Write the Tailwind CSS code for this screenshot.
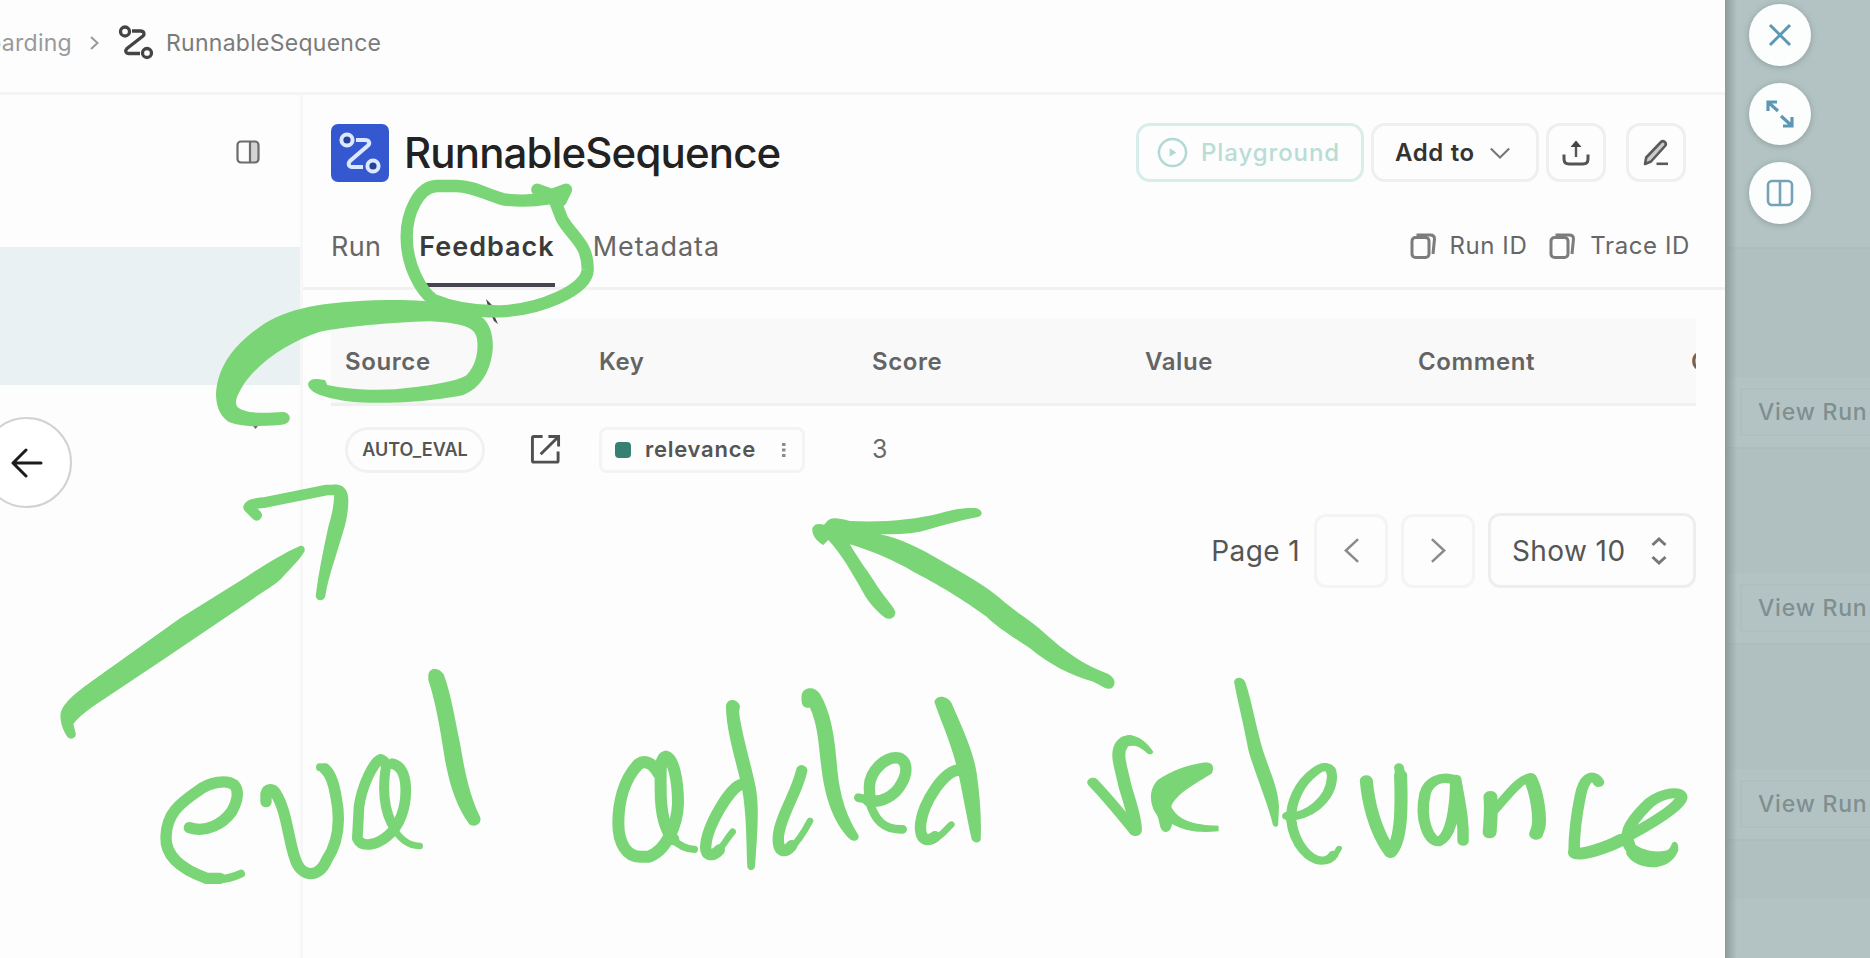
<!DOCTYPE html>
<html lang="en">
<head>
<meta charset="utf-8">
<title>RunnableSequence</title>
<script src="https://cdn.jsdelivr.net/npm/@tailwindcss/browser@4"></script>
</head>
<body class="relative flex h-[958px] w-[1870px] overflow-hidden bg-[#fdfdfd] font-['Inter',sans-serif] text-[#555]">

<!-- run drawer -->
<div class="flex w-[1725px] shrink-0 flex-col bg-[#fdfdfd]">
  <header class="flex h-[95px] shrink-0 items-center border-b-[3px] border-[#f4f4f4] pb-[6px] text-[23px] tracking-[0.27px] text-[#7b7b7b]">
    <div class="flex w-[72px] justify-end overflow-hidden whitespace-nowrap text-[#999]"><span>onboarding</span></div>
    <svg class="ml-[17px] h-4 w-3" viewBox="0 0 12 16" fill="none" stroke="#999" stroke-width="2"><path d="M2 2l6.500 6L2 14"/></svg>
    <svg class="ml-[17px] h-[36px] w-[36px]" viewBox="0 0 36 36" fill="none" stroke="#444" stroke-width="3.300"><circle cx="7" cy="6.500" r="4.500"/><circle cx="29" cy="28" r="4.500"/><path d="M14 6h8.500c3.500 0 4.500 3 2.500 5L9 23.500c-2.500 2.500-1 5 1.500 5H22"/></svg>
    <span class="ml-[12px]">RunnableSequence</span>
  </header>

  <div class="flex grow">
    <aside class="flex w-[303px] shrink-0 flex-col border-r-[3px] border-[#f7f7f7]">
      <div class="flex h-[152px] justify-end pr-[40px] pt-[45px]">
        <svg class="h-6 w-6" viewBox="0 0 24 24" fill="none" stroke="#6c6c6c" stroke-width="2.200"><path d="M14.500 2h5a2.500 2.500 0 0 1 2.500 2.500v15a2.500 2.500 0 0 1-2.500 2.500h-5z" fill="#d4d4d4" stroke="none"/><rect x="1.500" y="1.500" width="21" height="21" rx="3.500"/><path d="M14 2v20"/></svg>
      </div>
      <div class="h-[138px] bg-[#e9f1f2]"></div>
      <svg class="ml-[247px] mt-[36px] h-[10px] w-[17px]" viewBox="0 0 17 10"><path d="M3 1h11L8.500 8z" fill="#666"/></svg>
    </aside>

    <main class="flex grow flex-col pt-[28px]">
      <div class="flex h-[59px] items-center pl-[28px] pr-[39px]">
        <div class="flex h-[58px] w-[58px] items-center justify-center rounded-[7px] bg-[#3558d0]">
          <svg class="h-[42px] w-[42px]" viewBox="0 0 42 42" fill="none" stroke="#dbe8ff" stroke-width="4"><circle cx="8" cy="8" r="5.600" fill="#274099"/><circle cx="34" cy="34" r="5.600" fill="#274099"/><path d="M17 8h9c4 0 5.500 3 3 5.500L11 29c-2.500 3-1 6 2 6h11"/></svg>
        </div>
        <h1 class="ml-[15px] text-[42px] font-medium tracking-[-0.85px] text-[#222]">RunnableSequence</h1>
        <div class="ml-auto flex">
          <button class="flex h-[59px] w-[228px] items-center rounded-[14px] border-[3px] border-[#d8eeeb] pl-[18px] text-[24px] font-medium tracking-[0.9px] text-[#b9dcd6]">
            <svg class="mr-[13px] h-[31px] w-[31px]" viewBox="0 0 32 32" fill="none" stroke="#b2d9d3" stroke-width="2.600"><circle cx="16" cy="16" r="14"/><path d="M13 11.500v9l7-4.500z" fill="#b2d9d3" stroke="none"/></svg><span>Playground</span>
          </button>
          <button class="ml-[7px] flex h-[59px] w-[168px] items-center rounded-[14px] border-[3px] border-[#efefef] pl-[21px] text-[24px] font-semibold tracking-[0.65px] text-[#333]"><span>Add to</span>
            <svg class="ml-[14px] h-4 w-[22px]" viewBox="0 0 24 16" fill="none" stroke="#777" stroke-width="2.200"><path d="M2 3l10 10L22 3"/></svg>
          </button>
          <button class="ml-[7px] flex h-[59px] w-[60px] items-center justify-center rounded-[14px] border-[3px] border-[#efefef]">
            <svg class="h-[28px] w-[28px]" viewBox="0 0 28 28" fill="none" stroke="#555" stroke-width="3"><path d="M2 15.500V20c0 3.500 2 5 5 5h14c3 0 5-1.500 5-5v-4.500"/><path d="M14 18V5" stroke-width="2.400"/><path d="M8.500 8L14 1.500 19.500 8z" fill="#444" stroke="none"/></svg>
          </button>
          <button class="ml-[20px] flex h-[59px] w-[60px] items-center justify-center rounded-[14px] border-[3px] border-[#efefef]">
            <svg class="h-[28px] w-[28px]" viewBox="0 0 28 28" fill="none" stroke="#5a5a5a" stroke-width="2.600" stroke-linejoin="round"><path d="M3 25l1.200-6.500L19 3c2.200-2.200 6.500 1 4 4L9 22.500z" fill="#ccc"/><path d="M14.500 24.800H26"/></svg>
          </button>
        </div>
      </div>

      <nav class="flex h-[108px] border-b-[3px] border-[#f1f1f1] pl-[28px] pr-[35px] text-[27px]">
        <div class="flex h-[105px] items-center pt-[25px] tracking-[0.3px] text-[#666]">Run</div>
        <div class="ml-[38px] flex h-[105px] items-center border-b-4 border-[#484450] pt-[29px] font-semibold tracking-[1px] text-[#3a3a3a]">Feedback</div>
        <div class="ml-[38px] flex h-[105px] items-center pt-[25px] tracking-[0.9px] text-[#666]">Metadata</div>
        <div class="ml-auto flex h-[105px] items-center pt-[22px] text-[24px] tracking-[0.6px] text-[#666]">
          <svg class="mr-[11px] h-[28px] w-[28px]" viewBox="0 0 28 28" fill="none" stroke="#7c7c7c" stroke-width="3"><rect x="2" y="5.500" width="17" height="20" rx="3.500"/><path d="M6.500 3h14c2.500 0 4 1.500 4 4l-1.500 15"/></svg><span>Run ID</span>
          <svg class="ml-[22px] mr-[13px] h-[28px] w-[28px]" viewBox="0 0 28 28" fill="none" stroke="#7c7c7c" stroke-width="3"><rect x="2" y="5.500" width="17" height="20" rx="3.500"/><path d="M6.500 3h14c2.500 0 4 1.500 4 4l-1.500 15"/></svg><span>Trace ID</span>
        </div>
      </nav>

      <div class="ml-[28px] mt-[28px] w-[1365px] overflow-hidden">
        <div class="grid h-[88px] w-[1638px] grid-cols-[268px_273px_273px_273px_273px_273px] items-center border-b-[3px] border-[#f0f0f0] bg-[#f9f9f9] pt-[2px] text-[24px] font-semibold tracking-[0.6px] text-[#646464]">
          <div class="pl-[14px]">Source</div><div>Key</div><div>Score</div><div>Value</div><div>Comment</div><div>Created At</div>
        </div>
        <div class="grid h-[87px] w-[1638px] grid-cols-[268px_273px_273px_273px_273px_273px] items-center text-[22px]">
          <div class="flex items-center pl-[14px]">
            <div class="flex h-[46px] w-[140px] items-center justify-center rounded-full border-[3px] border-[#f1f1f1] text-[18px] font-semibold text-[#555]">AUTO_EVAL</div>
            <svg class="ml-[45px] h-[31px] w-[31px]" viewBox="0 0 32 32" fill="none" stroke="#505050" stroke-width="3"><path d="M13 2.500H4A1.500 1.500 0 0 0 2.500 4v23.500A1.500 1.500 0 0 0 4 29h23.500a1.500 1.500 0 0 0 1.500-1.500V18"/><path d="M19 2.500h10.500V13M29 3L11 21"/></svg>
          </div>
          <div class="flex h-[46px] w-[206px] items-center rounded-[8px] border-[3px] border-[#f3f4f6] pl-[13px] font-semibold tracking-[0.75px]">
            <div class="mr-[14px] h-[16px] w-[16px] rounded-[4px] bg-[#358073]"></div><span>relevance</span>
            <svg class="ml-[25px] h-[16px] w-[5px]" viewBox="0 0 5 16" fill="#8c8c8c"><rect x="1" y="1" width="3.500" height="3"/><rect x="1" y="6.500" width="3.500" height="3"/><rect x="1" y="12" width="3.500" height="3"/></svg>
          </div>
          <div class="text-[25px] text-[#6a6a6a]">3</div>
        </div>
      </div>

      <div class="mt-[20px] flex items-center justify-end pr-[29px] text-[28px] tracking-[0.4px]">
        <span>Page 1</span>
        <button class="ml-[14px] flex h-[74px] w-[74px] items-center justify-center rounded-[12px] border-[3px] border-[#f4f4f4]"><svg class="h-[27px] w-[17px]" viewBox="0 0 18 28" fill="none" stroke="#8a8a8a" stroke-width="2.600"><path d="M16 2L3 14l13 12"/></svg></button>
        <button class="ml-[13px] flex h-[74px] w-[74px] items-center justify-center rounded-[12px] border-[3px] border-[#f4f4f4]"><svg class="h-[27px] w-[17px]" viewBox="0 0 18 28" fill="none" stroke="#8a8a8a" stroke-width="2.600"><path d="M2 2l13 12L2 26"/></svg></button>
        <button class="ml-[13px] flex h-[75px] w-[208px] items-center rounded-[12px] border-[3px] border-[#eee] pl-[21px]"><span>Show 10</span>
          <svg class="ml-[26px] h-[30px] w-[16px]" viewBox="0 0 16 30" fill="none" stroke="#777" stroke-width="3"><path d="M1.500 9L8 3l6.500 6M1.500 21L8 27l6.500-6"/></svg>
        </button>
      </div>
    </main>
  </div>
</div>

<!-- dimmed page behind the drawer -->
<div class="flex grow flex-col bg-[#b3c3c4]">
  <div class="flex h-[249px] flex-col items-center gap-[17px] border-b-2 border-[#adbcbd] pr-[35px] pt-[4px]">
    <div class="flex h-[62px] w-[62px] shrink-0 items-center justify-center rounded-full bg-[#fcfefe] shadow-[0_1px_6px_#8b9b9b]"><svg class="h-6 w-6" viewBox="0 0 24 24" fill="none" stroke="#5d97b3" stroke-width="3"><path d="M2 2l20 20M22 2L2 22"/></svg></div>
    <div class="flex h-[62px] w-[62px] shrink-0 items-center justify-center rounded-full bg-[#fcfefe] shadow-[0_1px_6px_#8b9b9b]"><svg class="h-[28px] w-[28px]" viewBox="0 0 28 28" fill="none" stroke="#5d97b3" stroke-width="3.200"><path d="M2 11V2h9M2.500 2.500L12 11M17 26h9v-9M25.500 25.500L15 16"/></svg></div>
    <div class="flex h-[62px] w-[62px] shrink-0 items-center justify-center rounded-full bg-[#fcfefe] shadow-[0_1px_6px_#8b9b9b]"><svg class="h-[28px] w-[28px]" viewBox="0 0 28 28" fill="none" stroke="#76a2b8" stroke-width="2.600"><rect x="2" y="2" width="24" height="24" rx="4"/><path d="M14 2v24"/></svg></div>
  </div>
  <div class="flex h-[200px] flex-col justify-end bg-[#b0bfc0]"><div class="flex h-[72px] items-center border-b-2 border-[#adbcbd] bg-[#b3c3c4] pl-[15px]"><div class="flex h-[48px] w-[130px] shrink-0 items-center whitespace-nowrap border-y-2 border-l-2 border-[#afbebf] pl-[16px] text-[23px] font-medium tracking-[0.8px] text-[#7f8f90]">View Run</div></div></div>
  <div class="flex h-[196px] flex-col justify-end bg-[#b0bfc0]"><div class="flex h-[72px] items-center border-b-2 border-[#adbcbd] bg-[#b3c3c4] pl-[15px]"><div class="flex h-[48px] w-[130px] shrink-0 items-center whitespace-nowrap border-y-2 border-l-2 border-[#afbebf] pl-[16px] text-[23px] font-medium tracking-[0.8px] text-[#7f8f90]">View Run</div></div></div>
  <div class="flex h-[196px] flex-col justify-end bg-[#b0bfc0]"><div class="flex h-[72px] items-center border-b-2 border-[#adbcbd] bg-[#b3c3c4] pl-[15px]"><div class="flex h-[48px] w-[130px] shrink-0 items-center whitespace-nowrap border-y-2 border-l-2 border-[#afbebf] pl-[16px] text-[23px] font-medium tracking-[0.8px] text-[#7f8f90]">View Run</div></div></div>
  <div class="h-[58px] bg-[#b0bfc0]"></div>
</div>

<!-- drawer edge shadow -->
<div class="absolute left-[1725px] top-0 h-[958px] w-[12px] bg-linear-to-r from-[#8c9a9a] to-[#8c9a9a]/0"></div>

<!-- back button -->
<div class="absolute left-[-19px] top-[417px] flex h-[91px] w-[91px] items-center justify-center rounded-full border-2 border-[#d2d2d2] bg-white">
  <svg class="h-[30px] w-[32px]" viewBox="0 0 32 30" fill="none" stroke="#1c1c1c" stroke-width="3" stroke-linecap="round" stroke-linejoin="round"><path d="M30 15H2M15 2L2 15l13 13"/></svg>
</div>

<!-- pointer and freehand pen marks -->
<svg class="pointer-events-none absolute left-0 top-0 h-[958px] w-[1870px]" viewBox="0 0 1870 958" fill="none" stroke-linecap="round" stroke-linejoin="round">
  <path d="M486 299l9 9-2 5 5 11-4-3-5-11z" fill="#4a4550"/>
  <g stroke="#79d575" stroke-width="37" transform="translate(300 90) scale(.33333)">
    <path d="M745 325C700 333 650 333 610 328C560 315 520 288 470 288H410C355 290 320 370 320 440C320 530 365 605 400 630C460 655 520 665 600 664C720 660 860 600 863 540C865 460 815 440 785 385L762 325"/>
    <path d="M712 299L755 315L798 299L782 332" />
  </g>
  <g fill="#79d575" transform="translate(200 280) scale(.33333)">
    <path d="M255 432C230 438 210 436 180 438C150 440 110 435 85 425C55 405 48 370 48 340C55 250 110 190 180 140C260 85 360 65 560 60C700 58 800 75 850 115C875 140 882 180 877 220C868 280 840 325 790 345C720 360 620 368 560 368C480 370 420 364 370 348C330 335 322 320 325 308C335 292 350 297 375 300L382 315C450 330 550 335 640 322C720 312 780 300 800 285C825 260 835 220 832 185C830 150 810 130 690 124C560 128 440 140 360 155C270 185 180 240 130 315C110 350 105 360 110 378C130 402 190 400 250 396C275 400 275 425 255 432Z"/>
  </g>
  <g transform="translate(0 400) scale(.33333)">
    <path stroke="#79d575" stroke-width="32" d="M770 346L746 322C750 314 760 311 790 308L980 270H1010"/>
    <path fill="#79d575" d="M1000 254C1030 252 1045 270 1045 300C1045 330 1040 365 1028 400C1005 480 985 530 976 588C972 605 950 605 947 588C955 520 970 450 985 380C997 340 1003 310 1003 270Z"/>
    <path fill="#79d575" d="M895 440C850 460 800 490 740 530L540 655L330 805C260 855 190 900 182 940C178 970 195 1000 203 1012C215 1022 230 1012 227 1000L220 972C235 950 270 925 300 905L480 785L740 610C780 580 820 560 845 535C870 505 895 485 913 455C918 440 905 433 895 440Z"/>
  </g>
  <g fill="#79d575" transform="translate(700 320) scale(.33333)">
    <path d="M380 605C395 590 410 594 450 603C550 608 640 600 720 580C770 565 810 562 830 565C850 572 850 588 830 592C780 600 720 620 660 635C620 642 580 643 540 643C600 655 660 685 720 720C800 765 860 800 900 835C950 880 1000 905 1040 945C1090 990 1150 1035 1225 1062C1245 1075 1250 1090 1235 1105C1220 1110 1210 1100 1180 1085C1110 1065 1050 1035 990 985C930 945 890 920 860 890C800 845 700 785 640 755C580 720 520 695 450 673C470 710 500 750 520 780C550 830 575 850 586 875C586 895 570 900 555 893C525 870 500 840 480 800C450 750 430 710 385 660L370 675C350 665 335 645 337 625C345 608 360 612 372 614Z"/>
  </g>
  <g stroke="#79d575" transform="translate(140 640) scale(.33333)" role="img" aria-label="eval">
    <path stroke-width="34" d="M148 563C200 580 250 550 275 515C295 480 297 450 283 435C260 418 210 425 175 452C120 490 80 520 78 590C75 650 130 690 200 715H240"/>
    <path stroke-width="24" d="M230 719C265 717 280 712 303 701"/>
    <path stroke-width="34" d="M378 485V462C382 445 398 445 407 460C440 510 445 600 465 655C480 710 535 720 560 660C600 600 600 530 588 470C580 420 570 400 555 387"/>
    <path stroke-width="24" d="M555 383L540 382"/>
    <path stroke-width="32" d="M722 358C700 365 665 440 657 500L652 595C665 625 710 615 740 590C780 560 800 500 797 440C795 400 780 375 757 371"/>
    <path stroke-width="30" d="M725 360C738 362 740 375 735 400C728 460 735 510 755 550"/>
    <path stroke-width="20" d="M752 550C775 595 805 618 839 618"/>
    <path fill="#79d575" stroke="none" d="M865 105C868 80 900 82 912 105C935 170 945 240 960 310C975 400 990 470 1020 530C1028 550 1005 565 988 553C950 500 930 440 915 360C900 260 885 180 865 120Z"/>
  </g>
  <g stroke="#79d575" transform="translate(590 670) scale(.33333)" role="img" aria-label="added">
    <path stroke-width="36" d="M205 310C190 280 165 268 145 283C100 330 85 400 85 460C85 520 110 560 150 560H175C225 545 262 470 264 400C264 330 250 265 228 260C208 265 212 310 212 360C212 430 225 480 250 508"/>
    <path stroke-width="22" d="M245 505C265 525 290 537 313 538"/>
    <path stroke-width="34" d="M455 343C420 350 350 470 347 530C345 560 370 560 388 540"/>
    <path stroke-width="20" d="M380 546C400 530 410 505 428 485"/>
    <path stroke-width="34" d="M635 302C620 370 570 440 565 500C562 550 585 550 605 527"/>
    <path stroke-width="20" d="M598 540C620 520 640 490 660 453"/>
    <path stroke-width="26" d="M805 383C840 390 850 390 870 395M938 478C880 480 855 450 838 395"/>
    <path stroke-width="34" d="M835 392C870 400 915 380 935 340C955 305 950 275 930 265C890 255 840 300 838 350L840 390"/>
    <path stroke-width="34" d="M1110 300C1060 300 1000 400 992 460C987 515 1015 515 1035 500"/>
    <path stroke-width="20" d="M1030 508C1055 500 1070 475 1084 464"/>
    <g fill="#79d575" stroke="none">
      <path d="M408 115C405 85 440 82 450 108L447 125C455 190 480 270 497 350C510 420 500 510 495 590C490 605 475 602 472 590C468 500 470 430 455 350C440 280 410 190 408 115Z"/>
      <path d="M635 75C640 50 675 48 690 72C725 130 735 210 742 300C750 380 770 440 805 495C810 510 795 518 780 508C730 460 705 380 695 300C685 220 685 170 660 113C640 115 632 105 635 75Z"/>
      <path d="M1033 95C1040 75 1070 75 1085 100C1110 160 1150 240 1160 310C1170 380 1175 450 1172 510C1165 522 1150 518 1145 508C1130 440 1120 380 1105 310C1085 220 1055 160 1033 95Z"/>
    </g>
  </g>
  <g stroke="#79d575" transform="translate(1070 660) scale(.40816 .33333)" role="img" aria-label="relevance">
    <path stroke-width="28" d="M56 367C90 410 130 470 158 512"/>
    <path stroke-width="32" d="M160 512C162 480 145 420 135 380C125 320 110 280 128 252C134 242 142 241 148 242"/>
    <path fill="#79d575" stroke="none" d="M140 225C170 225 190 250 204 275C202 285 192 286 186 276C172 262 160 254 140 256Z"/>
    <path fill="#79d575" stroke="none" d="M325 308C350 305 354 318 348 340C310 370 260 400 248 440C265 480 300 495 364 497V514C310 520 280 512 250 492C248 512 238 520 228 514C216 500 222 480 210 460C195 430 192 390 215 360C250 330 290 315 325 308Z"/>
    <path fill="#79d575" stroke="none" d="M402 65C405 48 425 50 430 68C445 120 455 200 475 280C495 350 510 390 512 440L510 495C505 505 497 500 496 490C485 430 450 330 437 270C425 190 410 120 402 65Z"/>
    <path stroke-width="25" d="M532 468C580 475 640 420 642 350C642 315 620 315 600 335C560 370 540 430 542 480C550 560 590 600 615 602C630 602 640 595 645 585"/>
    <path stroke-width="15" d="M643 592C650 585 655 575 659 565"/>
    <path stroke-width="32" d="M726 362C730 420 745 510 785 578C815 540 812 420 810 345"/>
    <path stroke-width="24" d="M806 322L810 350"/>
    <path stroke-width="28" d="M935 357C910 350 880 360 870 400C855 480 880 545 903 545C935 530 945 440 945 358C955 430 965 480 963 543"/>
    <path stroke-width="34" d="M1030 410C1033 450 1030 490 1028 518"/>
    <path stroke-width="24" d="M1040 450C1070 410 1105 350 1130 352"/>
    <path stroke-width="34" d="M1128 357C1145 400 1152 470 1148 500L1142 522"/>
    <path stroke-width="28" d="M1295 367C1280 335 1258 355 1250 410C1240 470 1235 530 1235 575"/>
    <path stroke-width="36" d="M1238 578C1250 590 1320 560 1350 540"/>
    <path stroke-width="30" d="M1345 543C1430 490 1498 435 1498 412C1495 385 1435 405 1410 440C1370 490 1350 530 1380 575"/>
    <path fill="#79d575" stroke="none" d="M1380 550C1400 570 1430 578 1455 573C1475 570 1470 550 1480 545C1490 545 1491 560 1490 572C1480 605 1455 622 1425 622C1390 620 1370 600 1362 580Z"/>
  </g>
</svg>
</body>
</html>
